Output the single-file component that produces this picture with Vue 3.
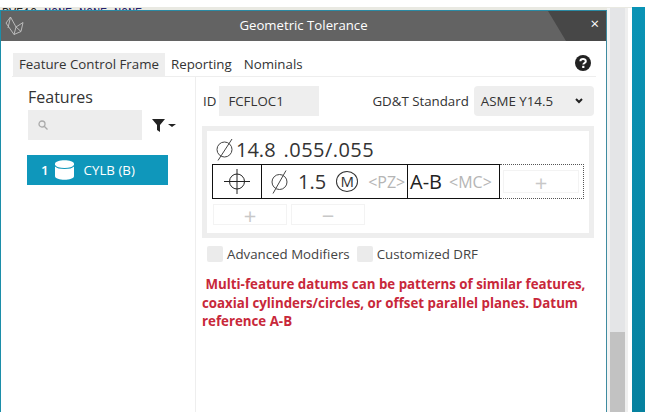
<script setup>
const tabs = ['Feature Control Frame', 'Reporting', 'Nominals']
</script>

<template>
  <div class="desk">
    <div class="band"></div>
    <div class="legacy">PVF10 <span class="none">NONE NONE NONE</span></div>
    <div class="side"></div>
    <div class="scroll"><div class="thumb"></div></div>
    <section class="win">
      <header class="title">
        <svg class="logo" width="19" height="20" viewBox="0 0 19 20" fill="none" stroke="#c4c4c4" stroke-width="0.9">
          <path d="M1 7 L5.5 1 L11 11 L9 18.5 Z M11 11 L18 6.5 L16 15.5 L9 18.5 M5.5 1 L3 12 M11 11 L16 15.5" />
        </svg>
        <span class="title-text">Geometric Tolerance</span>
        <div class="corner"><span class="close">×</span></div>
      </header>
      <nav class="tabs">
        <span v-for="(t, i) in tabs" :key="t" class="tab" :class="{ on: i === 0 }">{{ t }}</span>
        <svg class="help" width="16" height="16" viewBox="0 0 16 16">
          <circle cx="8" cy="8" r="8" fill="#222" />
          <path d="M5.4 6.2 C5.4 3.2 10.8 3.2 10.8 6.2 C10.8 8 8.3 8 8.3 9.6" fill="none" stroke="#fff" stroke-width="2" />
          <rect x="7.2" y="10.8" width="2.2" height="2.2" fill="#fff" />
        </svg>
      </nav>
      <div class="body">
        <aside class="left">
          <h2 class="features">Features</h2>
          <div class="search-row">
            <div class="search">
              <svg width="10" height="10" viewBox="0 0 10 10" fill="none" stroke="#aaa" stroke-width="1.3">
                <circle cx="4" cy="4" r="3" />
                <path d="M6.2 6.2 L9.5 9.5" />
              </svg>
            </div>
            <svg class="funnel" width="13" height="13" viewBox="0 0 13 13"><path d="M0 0 H13 L8 6 V13 L5 11 V6 Z" fill="#222" /></svg>
            <span class="caret"></span>
          </div>
          <div class="feature">
            <span class="num">1</span>
            <svg width="19" height="20" viewBox="0 0 19 20">
              <path d="M0 4 C0 -1 19 -1 19 4 V16 C19 21 0 21 0 16 Z" fill="#fff" />
              <path d="M0 5.5 C2 9.5 17 9.5 19 5.5" fill="none" stroke="#0f97bb" stroke-width="1.2" />
            </svg>
            <span class="fname">CYLB (B)</span>
          </div>
        </aside>
        <main class="right">
          <div class="id-row">
            <span class="lbl">ID</span>
            <div class="id-box">FCFLOC1</div>
            <span class="lbl std">GD&amp;T Standard</span>
            <div class="select">
              <span>ASME Y14.5</span>
              <svg width="8" height="6" viewBox="0 0 8 6" fill="none" stroke="#222" stroke-width="2"><path d="M1 1 L4 4 L7 1" /></svg>
            </div>
          </div>
          <div class="frame-box">
            <div class="dim">
              <svg class="dia-big" width="19" height="23" viewBox="0 0 19 23" fill="none" stroke="#444" stroke-width="1">
                <circle cx="9.5" cy="11.5" r="7.5" />
                <path d="M3 22.5 L17 1" />
              </svg>
              <span class="dim-val">14.8</span><span class="tol">.055/.055</span>
            </div>
            <div class="fcf-row">
              <div class="fcf">
                <div class="cell c1">
                  <svg width="26" height="25" viewBox="0 0 26 25" fill="none" stroke="#222" stroke-width="1">
                    <circle cx="13" cy="12.5" r="7.5" />
                    <path d="M0 12.5 H26 M13 0 V25" />
                  </svg>
                </div>
                <div class="cell c2">
                  <svg width="17" height="24" viewBox="0 0 17 24" fill="none" stroke="#444" stroke-width="1">
                    <circle cx="8.5" cy="12" r="7.5" />
                    <path d="M2 23.5 L15 0.5" />
                  </svg>
                  <span class="val">1.5</span>
                  <span class="m">M</span>
                  <span class="ph">&lt;PZ&gt;</span>
                </div>
                <div class="cell c3">
                  <span class="datum">A-B</span>
                  <span class="ph">&lt;MC&gt;</span>
                </div>
              </div>
              <div class="add-wrap"><span class="mini wide">+</span></div>
            </div>
            <div class="btns">
              <span class="mini">+</span>
              <span class="mini">−</span>
            </div>
          </div>
          <div class="checks">
            <span class="box"></span><span class="chk">Advanced Modifiers</span>
            <span class="box two"></span><span class="chk">Customized DRF</span>
          </div>
          <p class="err">&nbsp;Multi-feature datums can be patterns of similar features, coaxial cylinders/circles, or offset parallel planes. Datum reference A-B</p>
        </main>
      </div>
    </section>
  </div>
</template>

<style>
html, body { margin: 0; background: #fff; overflow: hidden; }
</style>

<style scoped>
.desk { position: relative; width: 645px; height: 412px; overflow: hidden; background: #fff; font-family: "Open Sans", sans-serif; color: #333; }
.band { position: absolute; left: 0; top: 7px; width: 632px; height: 4px; background: #e9e9e2; }
.legacy { position: absolute; left: 2px; top: 7px; font: 12px/14px "Liberation Mono", monospace; letter-spacing: -.2px; color: #222; white-space: pre; }
.none { color: #22226e; }
.side { position: absolute; left: 632px; top: 7px; width: 13px; height: 405px; background: linear-gradient(#0a93b5, #06819f); }
.scroll { position: absolute; left: 607px; top: 8px; width: 25px; height: 404px; background: linear-gradient(90deg, #f4f4f4 0 3px, #e4e5e7 3px 18px, #efefef 18px 21px, #fff 21px); }
.thumb { position: absolute; left: 3px; top: 324px; width: 15px; height: 80px; background: #c2c2c2; }
.win { position: absolute; left: 0; top: 10px; width: 607px; height: 402px; box-sizing: border-box; border-left: 1px solid #1c8ea9; border-right: 1px solid #3f8ba0; border-top: 1px solid #2a8aa4; background: #fff; }
.title { height: 30px; padding-bottom: 2px; box-sizing: border-box; background: #636363; display: flex; align-items: center; justify-content: center; position: relative; color: #fff; }
.logo { position: absolute; left: 4px; top: 5px; }
.title-text { font-size: 13.2px; }
.corner { position: absolute; right: 0; top: 0; width: 58px; height: 30px; background: #474747; clip-path: polygon(0 0, 100% 0, 100% 100%, 18px 100%); }
.close { position: absolute; right: 7px; top: 3px; font-size: 15px; line-height: 18px; color: #fff; }
.tabs { display: flex; align-items: flex-end; height: 35px; margin: 0 10px 0 11px; border-bottom: 1px solid #eee; position: relative; font-size: 13.3px; color: #333; }
.tab { padding: 0 6px; height: 23px; line-height: 23px; white-space: nowrap; }
.tab.on { background: #eee; margin-left: 1px; }
.help { position: absolute; right: 5px; top: 14px; }
.body { display: flex; height: 335px; }
.left { width: 195px; box-sizing: border-box; border-right: 1px solid #eee; padding: 0 0 0 26px; }
.features { margin: 9px 0 0 1px; font-size: 16px; font-weight: 400; line-height: 22px; color: #333; }
.search-row { display: flex; align-items: center; margin: 2px 0 0 1px; }
.search { width: 114px; height: 30px; background: #ededed; display: flex; align-items: center; padding-left: 10px; box-sizing: border-box; }
.funnel { margin-left: 10px; }
.caret { margin-left: 3px; border-left: 4px solid transparent; border-right: 4px solid transparent; border-top: 3px solid #222; }
.feature { margin-top: 15px; width: 141px; height: 30px; background: #0f97bb; color: #fff; display: flex; align-items: center; font-size: 13.3px; }
.num { margin-left: 14px; margin-right: 6px; font-weight: 600; }
.fname { margin-left: 10px; }
.right { flex: 1; padding: 0 0 0 7px; min-width: 0; }
.id-row { display: flex; align-items: center; height: 30px; margin-top: 9px; font-size: 13.3px; }
.lbl { color: #333; white-space: nowrap; }
.id-box { width: 100px; height: 30px; margin-left: 3px; background: #eee; line-height: 30px; padding-left: 9px; box-sizing: border-box; color: #333; }
.std { margin-left: 53px; }
.select { width: 120px; height: 30px; margin-left: 5px; background: #eee; border-radius: 4px; display: flex; justify-content: space-between; align-items: center; padding: 0 11px 0 7px; box-sizing: border-box; white-space: nowrap; }
.frame-box { width: 392px; height: 112px; margin: 10px 0 0 -1px; border: 5px solid #eee; box-sizing: border-box; padding: 7px 0 0 5px; background: #fff; }
.dim { display: flex; align-items: center; height: 26px; padding-bottom: 4px; box-sizing: border-box; margin-left: 3px; font-size: 20px; color: #333; }
.dim-val { margin-left: 2px; }
.tol { margin-left: 8px; letter-spacing: .45px; }
.fcf-row { display: flex; height: 35px; }
.fcf { display: flex; border: 1px solid #111; box-sizing: border-box; height: 35px; }
.cell { display: flex; align-items: center; height: 33px; box-sizing: border-box; }
.c1 { width: 49px; justify-content: center; border-right: 1px solid #111; }
.c2 { width: 146px; border-right: 1px solid #111; padding-left: 9px; font-size: 20px; }
.val { margin-left: 10px; color: #333; }
.m { width: 22px; height: 21px; margin-left: 10px; border: 1px solid #333; border-radius: 50%; box-sizing: border-box; font-size: 15px; line-height: 19px; text-align: center; }
.ph { color: #b5b5b5; font-size: 16px; margin-left: 10px; white-space: nowrap; }
.c3 { width: 91px; padding-left: 2px; }
.datum { font-size: 20px; color: #222; }
.c3 .ph { margin-left: 7px; }
.add-wrap { width: 84px; height: 35px; border: 1px dotted #555; border-left: 0; box-sizing: border-box; display: flex; align-items: center; padding-left: 3px; }
.mini { display: inline-flex; align-items: center; justify-content: center; width: 72px; height: 19px; border: 1px solid #f3f3f3; color: #c8c8c8; font-size: 22px; }
.wide { width: 74px; height: 21px; }
.btns { display: flex; gap: 4px; margin: 5px 0 0 1px; }
.checks { display: flex; align-items: center; margin: 8px 0 0 4px; height: 16px; font-size: 13.3px; }
.box { width: 16px; height: 16px; background: #ebebeb; border-radius: 2px; }
.two { margin-left: 7px; }
.chk { margin-left: 4px; color: #444; white-space: nowrap; }
.err { margin: 13px 0 0 -1px; width: 392px; color: #c8283a; font-weight: 700; font-size: 13.3px; line-height: 18.5px; }
</style>
